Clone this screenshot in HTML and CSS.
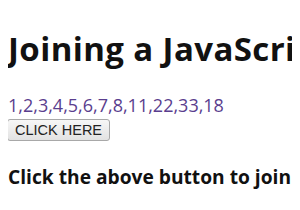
FILE: index.html
```html
<!DOCTYPE html>
<html lang="en">
<head>
    <meta charset="UTF-8">
    <title>Joining a JavaScript array</title>
    <link rel="stylesheet" href="styles.css">
</head>
<body>

<h1>Joining a JavaScript array</h1>
<div class="result" id="result">1,2,3,4,5,6,7,8,11,22,33,18</div>
<button class="btn">CLICK HERE</button>
<h3>Click the above button to join the array</h3>

</body>
</html>
```

FILE: styles.css
```css
body {
    font-family: "Open Sans", "Noto Sans", sans-serif;
    margin: 8px;
    background-color: #ffffff;
    color: #111111;
    white-space: nowrap;
    overflow: hidden;
}
h1 {
    font-size: 33px;
    font-weight: bold;
    letter-spacing: 0.4px;
    margin: 18px 0 22px;
}
.result {
    font-size: 18px;
    color: #5a3e8e;
}
.btn {
    display: block;
    box-sizing: border-box;
    height: 22px;
    margin: 2px 0 0 -1px;
    padding: 0 7px;
    font-family: Arial, "Liberation Sans", sans-serif;
    font-size: 14.5px;
    color: #222222;
    background: linear-gradient(#f7f7f7, #e2e2e2);
    border: 1px solid #a8a8a8;
    border-radius: 3px;
}
h3 {
    font-size: 19.2px;
    margin: 22px 0;
}
```
